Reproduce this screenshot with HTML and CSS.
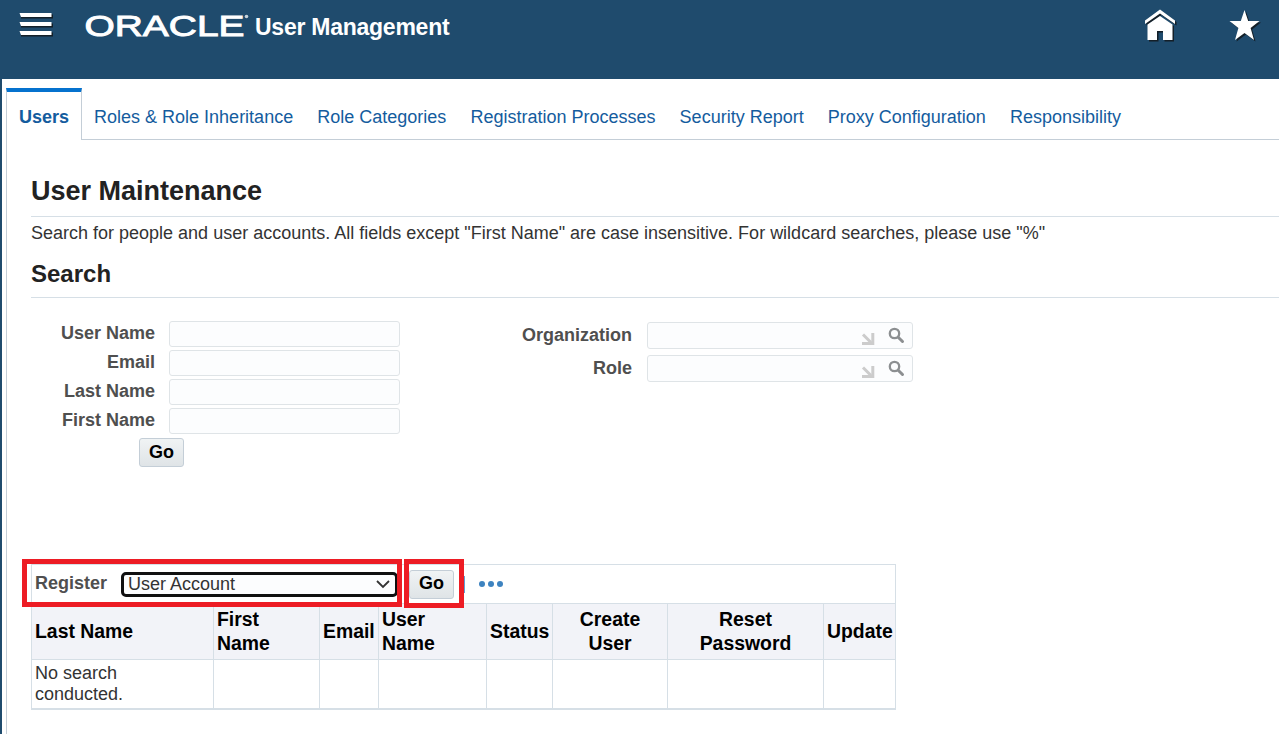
FILE: index.html
```html
<!DOCTYPE html>
<html lang="en">
<head>
<meta charset="utf-8">
<title>User Management</title>
<link rel="stylesheet" href="styles.css">
</head>
<body>
<div class="app">
  <header class="topbar">
    <svg class="menu-icon" width="36" height="30" viewBox="0 0 36 30">
      <path class="shade" d="M3 4.500h32v4H3zM3 13.500h32v4H3zM3 22.500h32v4H3z"/>
      <path class="ink" d="M1.500 3H33.500v4H3zM1.500 12H33.500v4H3zM1.500 21H33.500v4H3z"/>
    </svg>
    <svg class="logo" width="166" height="34" viewBox="0 0 166 34">
      <text class="logo-text" x="-.5" y="28" textLength="160" lengthAdjust="spacingAndGlyphs">ORACLE</text>
      <circle class="ink" cx="161.500" cy="8.500" r="1.800" opacity=".75"/>
    </svg>
    <h1 class="product">User Management</h1>
    <nav class="shortcuts">
      <svg width="36" height="36" viewBox="0 0 36 36">
        <g class="shade" transform="translate(1.5 1.5)"><path d="M18 2.500L3 13.500V17L18 6.500L33 17v-3.500z"/><path d="M18 9L5.500 17.500V33H15V24h6v9h9.500V17.500z"/></g>
        <g class="ink"><path d="M18 2.500L3 13.500V17L18 6.500L33 17v-3.500z"/><path d="M18 9L5.500 17.500V33H15V24h6v9h9.500V17.500z"/></g>
      </svg>
      <svg width="36" height="36" viewBox="0 0 36 36">
        <path class="shade" transform="translate(1.500 1.500)" d="M18.500 3L22.200 14H33.500L24.600 21L28 33L18.500 26L9 33L12.400 21L3.500 14H14.800z"/>
        <path class="ink" d="M18.500 3L22.200 14H33.500L24.600 21L28 33L18.500 26L9 33L12.400 21L3.500 14H14.800z"/>
      </svg>
    </nav>
  </header>
  <div class="body">
    <nav class="tabs">
      <a class="tab active">Users</a>
      <a class="tab">Roles &amp; Role Inheritance</a>
      <a class="tab">Role Categories</a>
      <a class="tab">Registration Processes</a>
      <a class="tab">Security Report</a>
      <a class="tab">Proxy Configuration</a>
      <a class="tab">Responsibility</a>
    </nav>
    <main class="page">
      <h2 class="title">User Maintenance</h2>
      <p class="hint">Search for people and user accounts. All fields except "First Name" are case insensitive. For wildcard searches, please use "%"</p>
      <h3 class="subtitle">Search</h3>
      <form class="search">
        <div class="fields">
          <label class="label">User Name</label><input class="field">
          <label class="label">Email</label><input class="field">
          <label class="label">Last Name</label><input class="field">
          <label class="label">First Name</label><input class="field">
        </div>
        <div class="lookups">
          <label class="label">Organization</label>
          <div class="lookup">
            <svg width="14" height="14" viewBox="0 0 14 14"><path class="arrow" d="M2 2.500L10 10.500"/><path class="corner" d="M10.300 1H13.300V13H1V10H10.300z"/></svg>
            <svg width="18" height="18" viewBox="0 0 18 18"><circle class="lens" cx="6.500" cy="6.500" r="4.700"/><path class="handle" d="M10.200 10.200L14.500 14.500"/></svg>
          </div>
          <label class="label">Role</label>
          <div class="lookup">
            <svg width="14" height="14" viewBox="0 0 14 14"><path class="arrow" d="M2 2.500L10 10.500"/><path class="corner" d="M10.300 1H13.300V13H1V10H10.300z"/></svg>
            <svg width="18" height="18" viewBox="0 0 18 18"><circle class="lens" cx="6.500" cy="6.500" r="4.700"/><path class="handle" d="M10.200 10.200L14.500 14.500"/></svg>
          </div>
        </div>
      </form>
      <button class="go search-go">Go</button>
      <section class="results">
        <div class="toolbar">
          <span class="register">Register</span>
          <div class="select">User Account
            <svg width="16" height="10" viewBox="0 0 16 10"><path class="chevron" d="M2 2l6 6 6-6"/></svg>
          </div>
          <button class="go">Go</button>
          <span class="divider"></span>
          <svg class="more" width="26" height="8" viewBox="0 0 26 8"><circle cx="4" cy="4" r="3"/><circle cx="13" cy="4" r="3"/><circle cx="22" cy="4" r="3"/></svg>
          <div class="mark mark-register"></div>
          <div class="mark mark-go"></div>
        </div>
        <table class="grid">
          <colgroup><col class="c1"><col class="c2"><col class="c3"><col class="c4"><col class="c5"><col class="c6"><col class="c7"><col class="c8"></colgroup>
          <thead><tr><th>Last Name</th><th>First<br>Name</th><th>Email</th><th>User<br>Name</th><th>Status</th><th class="mid">Create<br>User</th><th class="mid">Reset<br>Password</th><th>Update</th></tr></thead>
          <tbody><tr><td>No search<br>conducted.</td><td></td><td></td><td></td><td></td><td></td><td></td><td></td></tr></tbody>
        </table>
      </section>
    </main>
  </div>
</div>
</body>
</html>
```
FILE: styles.css
```css
* { box-sizing: border-box; }
body { margin: 0; background: #fff; font-family: "Liberation Sans", Arial, sans-serif; font-size: 18px; color: #333; overflow: hidden; }
.app { width: 1279px; height: 734px; overflow: hidden; }
.topbar { height: 79px; background: #1f4b6d; display: flex; align-items: flex-start; padding-left: 18px; }
.menu-icon { margin-top: 10px; }
.logo { margin: 8px 0 0 31px; overflow: visible; }
.logo-text { font-family: "Liberation Sans", Arial, sans-serif; font-size: 29px; fill: #fff; stroke: #fff; stroke-width: .9; }
.ink { fill: #fff; }
.shade { fill: #111; opacity: .75; }
.product { margin: 13px 0 0 4px; font-size: 23px; line-height: 28px; letter-spacing: -.25px; color: #fff; white-space: nowrap; }
.shortcuts { display: flex; gap: 48px; margin: 7px 17px 0 auto; }
.body { height: 655px; border-left: 2px solid #1f4b6d; padding: 9px 0 0 4px; }
.tabs { display: flex; height: 52px; }
.tab { flex: none; padding: 0 12.050px; border-bottom: 1px solid #c4ced7; line-height: 58px; color: #145c9e; white-space: nowrap; }
.tab:last-child { flex: 1; }
.active { width: 76px; border: 1px solid #c4ced7; border-top: 4px solid #0572ce; border-bottom: 0; line-height: 50px; font-weight: bold; }
.page { border-left: 1px solid #c4ced7; height: 594px; padding: 34px 0 0 24px; }
.title, .subtitle { margin: 0; color: #222; border-bottom: 1px solid #d6dfe6; }
.title { height: 43px; font-size: 27px; line-height: 34px; }
.hint { margin: 0; height: 39px; line-height: 32px; white-space: nowrap; }
.subtitle { height: 42px; font-size: 24px; line-height: 36px; }
.search { display: flex; gap: 122px; padding-top: 23px; }
.fields { display: grid; grid-template-columns: 124px 231px; column-gap: 14px; row-gap: 3px; grid-auto-rows: 26px; }
.lookups { display: grid; grid-template-columns: 110px 266px; column-gap: 15px; row-gap: 6px; grid-auto-rows: 27px; padding-top: 1px; }
.label { font-weight: bold; color: #4f4f4f; text-align: right; line-height: 24px; }
.lookups .label { line-height: 26px; }
.field, .lookup { width: 100%; height: 100%; border: 1px solid #dfe4e7; border-radius: 3px; background: #fcfdfe; }
.lookup { display: flex; align-items: center; justify-content: flex-end; gap: 13px; padding-right: 6px; }
.lookup svg:first-child { margin-top: 7px; }
.arrow { stroke: #ccc; stroke-width: 3; fill: none; }
.corner { fill: #ccc; }
.lens { stroke: #8c8f91; stroke-width: 2.300; fill: none; }
.handle { stroke: #8c8f91; stroke-width: 3; stroke-linecap: round; }
.go { width: 45px; height: 29px; padding: 0 0 1px; border: 1px solid #c4ced7; border-radius: 3px; background: linear-gradient(#f0f3f4, #dfe4e7); font: bold 18px "Liberation Sans", Arial, sans-serif; color: #000; }
.search-go { display: block; margin: 4px 0 0 108px; }
.results { width: 865px; margin-top: 97px; }
.toolbar { position: relative; display: flex; align-items: center; height: 39px; border: 1px solid #d6dfe6; border-bottom: 0; padding-left: 3px; }
.register { width: 86px; font-weight: bold; color: #4f4f4f; line-height: 35px; margin-bottom: 2px; }
.select { display: flex; justify-content: space-between; align-items: center; width: 277px; height: 25px; padding: 0 4px; border: 3px solid #101010; border-radius: 5px; background: #fcfdfe; }
.chevron { fill: none; stroke: #333; stroke-width: 1.800; }
.toolbar .go { margin-left: 11px; }
.divider { width: 1px; height: 17px; margin-left: 10px; background: #5fa0d3; }
.more { margin-left: 13px; fill: #3d83c0; }
.mark { position: absolute; border: 5px solid #ed1c24; }
.mark-register { left: -10px; top: -6px; width: 380px; height: 48px; }
.mark-go { left: 372px; top: -6px; width: 60px; height: 49px; }
.grid { table-layout: fixed; width: 865px; border-collapse: collapse; color: #333; }
.grid th, .grid td { border: 1px solid #d6dfe6; padding: 0 3px; text-align: left; white-space: nowrap; }
.grid th { height: 56px; padding-bottom: 2px; background: #f2f3f8; color: #000; font-size: 19.400px; line-height: 24px; }
.grid .mid { text-align: center; }
.grid td { height: 49px; line-height: 21px; border-bottom-width: 2px; }
.c1 { width: 182px; } .c2 { width: 106px; } .c3 { width: 59px; } .c4 { width: 108px; }
.c5 { width: 66px; } .c6 { width: 115px; } .c7 { width: 156px; } .c8 { width: 72px; }
```
